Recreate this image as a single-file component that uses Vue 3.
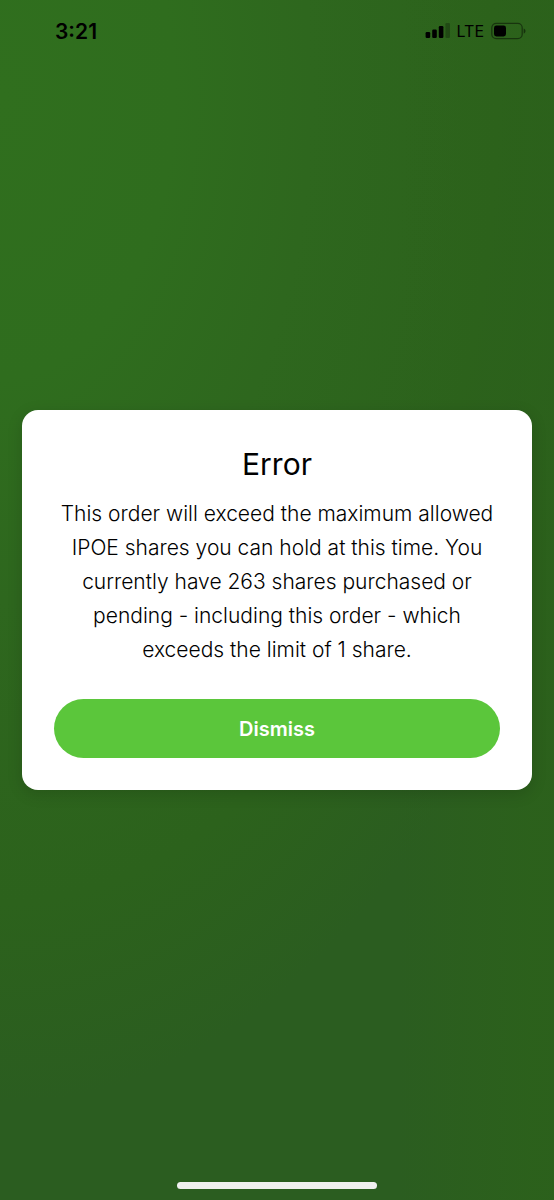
<template>
  <div class="screen">
    <header class="status-bar">
      <time class="clock">3:21</time>
      <div class="indicators">
        <svg class="signal" width="25" height="16" viewBox="0 0 25 16" aria-hidden="true">
          <rect
              v-for="(bar, index) in bars"
              :key="index"
              :x="bar.x"
              :y="15 - bar.height"
              width="4.6"
              :height="bar.height"
              rx="1.2"
              :opacity="bar.active ? 1 : 0.25"
          />
        </svg>
        <span class="network">LTE</span>
        <svg class="battery" width="35" height="18" viewBox="0 0 35 18" aria-hidden="true">
          <rect x="0.8" y="1.3" width="30.4" height="15.4" rx="4.4" fill="none" stroke="#000" stroke-opacity="0.45" stroke-width="1.3" />
          <rect x="3" y="3.5" width="12" height="11" rx="2.4" />
          <path d="M32.7 6.4c1.1.4 1.8 1.4 1.8 2.6s-.7 2.2-1.8 2.6z" opacity="0.5" />
        </svg>
      </div>
    </header>

    <main class="content">
      <section v-if="open" class="dialog" role="alertdialog" aria-labelledby="dialog-title" aria-describedby="dialog-message">
        <h1 id="dialog-title" class="title">{{ title }}</h1>
        <p id="dialog-message" class="message">{{ message }}</p>
        <button type="button" class="dismiss" @click="dismiss">Dismiss</button>
      </section>
    </main>

    <footer class="home">
      <div class="home-indicator"></div>
    </footer>
  </div>
</template>

<script setup>
import { ref } from 'vue'

const open = ref(true)
const title = 'Error'
const message = 'This order will exceed the maximum allowed IPOE shares you can hold at this time. You currently have 263 shares purchased or pending - including this order - which exceeds the limit of 1 share.'

const bars = [
  { x: 0.6, height: 6, active: true },
  { x: 7.2, height: 8.5, active: true },
  { x: 13.8, height: 12, active: true },
  { x: 20.4, height: 15, active: false }
]

const dismiss = () => {
  open.value = false
}
</script>

<style>
body {
  margin: 0;
}
</style>

<style scoped>
.screen {
  display: flex;
  flex-direction: column;
  min-height: 100vh;
  background:
    linear-gradient(90deg, rgba(44, 98, 26, 0) 72%, rgba(44, 98, 26, 0.7) 96%),
    radial-gradient(ellipse 112% 84% at 0% 8%, #306f1e 0%, #2f6d1e 28%, #2e671e 50%, #2c621c 80%, #2b5d20 100%);
  color: #000;
  font-family: Inter, "Liberation Sans", sans-serif;
}

.status-bar {
  display: flex;
  align-items: center;
  justify-content: space-between;
  height: 62px;
  padding: 0 28px 0 55px;
}

.clock {
  font-size: 21px;
  font-weight: 600;
}

.indicators {
  display: flex;
  align-items: center;
  gap: 7px;
}

.network {
  font-size: 16px;
  font-weight: 400;
}

.content {
  display: flex;
  flex: 1;
  align-items: center;
  padding: 0 22px;
}

.dialog {
  display: flex;
  flex: 1;
  flex-direction: column;
  padding: 32px;
  border-radius: 16px;
  background: #fff;
  box-shadow: 0 4px 16px rgba(0, 0, 0, 0.14);
  text-align: center;
}

.title {
  margin: 0 0 11px;
  font-size: 30px;
  font-weight: 400;
  line-height: 44px;
}

.message {
  margin: 0 0 32px;
  font-size: 21px;
  font-weight: 300;
  line-height: 34px;
}

.dismiss {
  height: 59px;
  border: 0;
  border-radius: 30px;
  background: #5bc63b;
  color: #fff;
  font-family: inherit;
  font-size: 20px;
  font-weight: 600;
  cursor: pointer;
}

.home {
  display: flex;
  align-items: flex-end;
  justify-content: center;
  height: 51px;
  padding-bottom: 11px;
}

.home-indicator {
  width: 36%;
  height: 7px;
  border-radius: 4px;
  background: #f0f0f0;
}
</style>
